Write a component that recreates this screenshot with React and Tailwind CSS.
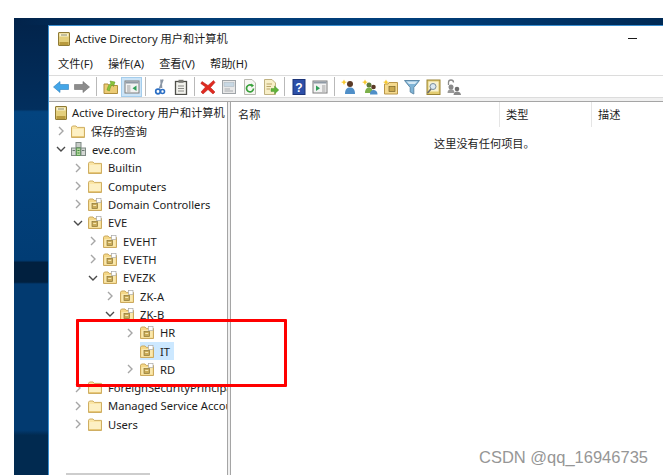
import React from 'react';

const uiFont = { fontFamily: '"Noto Sans", "Noto Sans CJK SC", sans-serif' };

function AdIcon() {
  return (
    <svg width="12" height="14" viewBox="0 0 12 14" className="shrink-0">
      <rect x="0.5" y="0.5" width="11" height="13" rx="0.5" fill="#e4cf7c" stroke="#8f7a35" />
      <rect x="1.5" y="1.5" width="9" height="3" fill="#f9f3cf" />
      <rect x="1.5" y="10" width="9" height="3" fill="#b89a3e" />
      <rect x="3" y="2.5" width="6" height="1" fill="#8c8c70" />
    </svg>
  );
}

function Folder() {
  return (
    <svg width="14" height="13" viewBox="0 0 14 13" className="shrink-0">
      <path d="M0.5 12.5V2.2L1.5 1H5L6.2 2.4H13.5V12.5Z" fill="#fbe6a6" stroke="#cfae62" />
      <rect x="1.5" y="4" width="11" height="7.5" fill="#fdf0c4" />
      <rect x="1" y="11" width="12" height="1" fill="#e8c878" />
    </svg>
  );
}

function OuFolder() {
  return (
    <svg width="14" height="13" viewBox="0 0 14 13" className="shrink-0">
      <path d="M0.5 12.5V2.2L1.5 1H5L6.2 2.4H13.5V12.5Z" fill="#f5d888" stroke="#cba95e" />
      <rect x="1.5" y="4" width="11" height="7.5" fill="#fae8ae" />
      <rect x="8.5" y="0.5" width="4.5" height="4" fill="#ffffff" stroke="#a8a8a8" strokeWidth="0.7" />
      <rect x="4" y="5.5" width="5.5" height="5" fill="#c9ab58" stroke="#8a7434" strokeWidth="0.7" />
      <rect x="5.2" y="7" width="3" height="1" fill="#f6e6b2" />
    </svg>
  );
}

function DomainIcon() {
  return (
    <svg width="15" height="14" viewBox="0 0 15 14" className="shrink-0">
      <rect x="5" y="0.5" width="5" height="5" fill="#c8cdc8" stroke="#7f8a85" />
      <rect x="0.5" y="6" width="4.5" height="7.5" fill="#d4d8d4" stroke="#7f8a85" />
      <rect x="5.5" y="6" width="4" height="7.5" fill="#b4d8a0" stroke="#5f9a58" />
      <rect x="10" y="6" width="4.5" height="7.5" fill="#d4d8d4" stroke="#7f8a85" />
      <rect x="1.5" y="8" width="2.5" height="1" fill="#6d7a75" />
      <rect x="11" y="8" width="2.5" height="1" fill="#6d7a75" />
      <rect x="6.5" y="8" width="2" height="1" fill="#3f8a3a" />
      <rect x="6.5" y="10.5" width="2" height="1" fill="#3f8a3a" />
    </svg>
  );
}

function Chevron({ open }) {
  return (
    <svg width="10" height="10" viewBox="0 0 10 10" className="shrink-0">
      {open ? (
        <path d="M1 3L5 7L9 3" fill="none" stroke="#4a4a4a" strokeWidth="1.4" />
      ) : (
        <path d="M3 1L7 5L3 9" fill="none" stroke="#a6a6a6" strokeWidth="1.4" />
      )}
    </svg>
  );
}

function Sep({ w }) {
  return (
    <div className={`${w} h-[19px] flex justify-center shrink-0`}>
      <div className="w-px h-full bg-[#b9b9b9]" />
    </div>
  );
}

function Tool({ selected, children }) {
  return (
    <div
      className={
        selected
          ? 'w-[21px] h-[20px] flex items-center justify-center shrink-0 bg-[#cce4f7] border border-[#a4cdec]'
          : 'w-[21px] h-[20px] flex items-center justify-center shrink-0'
      }
    >
      <svg width="16" height="16" viewBox="0 0 16 16">
        {children}
      </svg>
    </div>
  );
}

const spark = <path d="M3 0.5L4 2.5L6 3L4 4L3 6L2 4L0 3L2 2.5Z" fill="#f7c92e" />;

function Toolbar() {
  return (
    <div className="h-[21px] flex items-center pl-px bg-white border-y border-[#dcdcdc] box-content">
      <Tool>
        <path d="M0.5 8L7 2.5V5.5H15.5V10.5H7V13.5Z" fill="#44a6e8" stroke="#2a7fc0" strokeWidth="0.6" />
      </Tool>
      <Tool>
        <path d="M15.5 8L9 2.5V5.5H0.5V10.5H9V13.5Z" fill="#8c8c8c" stroke="#707070" strokeWidth="0.6" />
      </Tool>
      <Sep w="w-[8px]" />
      <Tool>
        <path d="M1 14.5V5H5L6 6.5H14.5V14.5Z" fill="#eccb74" stroke="#b08f3e" />
        <path d="M4 11C5 7 6 5 8 4.5L7 2L12 3L10.5 7.5L9.5 5.5C8 6.5 7 9 6.5 12Z" fill="#8ac43a" stroke="#5c9420" strokeWidth="0.5" />
      </Tool>
      <Tool selected>
        <rect x="1" y="2" width="14" height="12" fill="#f2f2f2" stroke="#7d7d7d" />
        <rect x="1.5" y="2.5" width="13" height="2" fill="#8f9aa5" />
        <rect x="3" y="6" width="3.5" height="7" fill="#c8c8c8" />
        <path d="M12.5 6.5V12L8.5 9.2Z" fill="#2f9e58" />
      </Tool>
      <Sep w="w-[7px]" />
      <Tool>
        <path d="M11 0.5L7.5 9.5M9 0.5L9.5 9" fill="none" stroke="#8a96a5" strokeWidth="1.6" />
        <circle cx="6" cy="12.5" r="2.3" fill="none" stroke="#2c6fc4" strokeWidth="1.7" />
        <circle cx="10.5" cy="12.5" r="2" fill="none" stroke="#2c6fc4" strokeWidth="1.6" />
      </Tool>
      <Tool>
        <rect x="2.5" y="2.5" width="11" height="13" fill="#f1f1ec" stroke="#4f4f4a" strokeWidth="1.3" />
        <rect x="5.5" y="0.8" width="5" height="3" fill="#7a7a75" />
        <path d="M5 7H11M5 9.5H11M5 12H11" stroke="#8a8a85" />
      </Tool>
      <Sep w="w-[6px]" />
      <Tool>
        <path d="M2 2.5L8 6.5L13.5 1.5L15 3.5L10.5 8.5L15 13L13 15L8 10.5L3 15L1 13L5.5 8L0.8 4.5Z" fill="#e02a20" stroke="#b01a14" strokeWidth="0.5" />
      </Tool>
      <Tool>
        <rect x="1.5" y="1.5" width="13" height="13" fill="#e8e8e8" stroke="#9fa4a8" />
        <rect x="3" y="3.5" width="10" height="4" fill="#c8d8e4" stroke="#a8b4bc" strokeWidth="0.5" />
        <path d="M3.5 10H9M3.5 12H12" stroke="#a8acb0" />
      </Tool>
      <Tool>
        <path d="M2.5 0.5H10L13.5 4V15.5H2.5Z" fill="#f6f6f2" stroke="#b9b9b0" />
        <path d="M11.5 9.5A3.5 3.5 0 1 1 10 6.5" fill="none" stroke="#38a13a" strokeWidth="1.7" />
        <path d="M9 4.5L12 6.5L9.5 8.5Z" fill="#38a13a" />
      </Tool>
      <Tool>
        <path d="M1.5 0.5H9L12.5 4V15.5H1.5Z" fill="#f8efc8" stroke="#bfb180" />
        <path d="M3.5 5H9M3.5 7.5H8M3.5 10H7" stroke="#b9a468" />
        <path d="M8 9.5H11.5V7L15.8 11L11.5 15V12.5H8Z" fill="#5fb33a" stroke="#3f8a22" strokeWidth="0.4" />
      </Tool>
      <Sep w="w-[7px]" />
      <Tool>
        <rect x="2" y="0.5" width="12" height="15" fill="#2c4fa8" stroke="#1c3478" />
        <text x="8" y="13" fontSize="12" fontWeight="700" textAnchor="middle" fill="#ffffff" fontFamily="Liberation Sans">?</text>
      </Tool>
      <Tool>
        <rect x="1" y="2" width="14" height="12" fill="#f2f2f2" stroke="#7d7d7d" />
        <rect x="1.5" y="2.5" width="13" height="2" fill="#8f9aa5" />
        <rect x="10" y="6" width="3.5" height="7" fill="#c8c8c8" />
        <path d="M4 6.5V12L8 9.2Z" fill="#2f9e58" />
      </Tool>
      <Sep w="w-[8px]" />
      <Tool>
        <circle cx="9" cy="5" r="3" fill="#5a3a26" />
        <path d="M4 15C4 10 6 8.5 9 8.5S14 10 14 15Z" fill="#4f8fc8" />
        {spark}
      </Tool>
      <Tool>
        <circle cx="7" cy="6" r="2.5" fill="#5f7a3a" />
        <path d="M3 14C3 10 5 8.5 7 8.5S11 10 11 14Z" fill="#7cb04a" />
        <circle cx="11.5" cy="8" r="2.3" fill="#5a3a26" />
        <path d="M8 15.5C8 12 10 11 11.5 11S15.5 12 15.5 15.5Z" fill="#4f8fc8" />
        {spark}
      </Tool>
      <Tool>
        <path d="M1.5 15V5H5L6 3.5H14.5V15Z" fill="#f5da8e" stroke="#b9964a" />
        <rect x="6" y="7.5" width="6" height="5" fill="#c9a84e" stroke="#7a6428" strokeWidth="0.7" />
        {spark}
      </Tool>
      <Tool>
        <path d="M0.5 1.5H15.5L9.8 8.5V15L6.2 13V8.5Z" fill="#7fb4d6" stroke="#5f8aa8" />
        <path d="M2.5 2.5H13.5L11 5H5Z" fill="#d5e8f4" />
      </Tool>
      <Tool>
        <rect x="2" y="1" width="13" height="14.5" fill="#e3cc70" stroke="#9a8334" />
        <rect x="3.5" y="2.5" width="10" height="10" fill="#f8f2cf" />
        <circle cx="8" cy="7.5" r="3" fill="#dbe9f2" stroke="#7b8f9c" />
        <path d="M6 10L2.5 14" stroke="#6d6d6d" strokeWidth="1.6" />
      </Tool>
      <Tool>
        <path d="M2.5 6V3.5A2.5 2.5 0 0 1 7.5 3.5" fill="none" stroke="#8a8a8a" strokeWidth="1.3" />
        <circle cx="5" cy="8" r="2.5" fill="#8a8a8a" />
        <path d="M1.5 14C1.5 11 3.5 10 5 10S8.5 11 8.5 14Z" fill="#9a9a9a" />
        <circle cx="11" cy="10" r="2.3" fill="#6f6f6f" />
        <path d="M7.5 16C7.5 13.5 9.5 12.5 11 12.5S15 13.5 15 16Z" fill="#8a8a8a" />
      </Tool>
    </div>
  );
}

const indents = {
  0: 'pl-[7px]',
  1: 'pl-[24px]',
  2: 'pl-[39px]',
  3: 'pl-[56px]',
  4: 'pl-[76px]',
};

const rows = [
  { level: 0, label: '保存的查询', icon: 'folder' },
  { level: 0, label: 'eve.com', icon: 'domain', open: true },
  { level: 1, label: 'Builtin', icon: 'folder' },
  { level: 1, label: 'Computers', icon: 'folder' },
  { level: 1, label: 'Domain Controllers', icon: 'ou' },
  { level: 1, label: 'EVE', icon: 'ou', open: true },
  { level: 2, label: 'EVEHT', icon: 'ou' },
  { level: 2, label: 'EVETH', icon: 'ou' },
  { level: 2, label: 'EVEZK', icon: 'ou', open: true },
  { level: 3, label: 'ZK-A', icon: 'ou' },
  { level: 3, label: 'ZK-B', icon: 'ou', open: true },
  { level: 4, label: 'HR', icon: 'ou' },
  { level: 4, label: 'IT', icon: 'ou', selected: true, noChevron: true },
  { level: 4, label: 'RD', icon: 'ou' },
  { level: 1, label: 'ForeignSecurityPrincipals', icon: 'folder' },
  { level: 1, label: 'Managed Service Accounts', icon: 'folder' },
  { level: 1, label: 'Users', icon: 'folder' },
];

function TreeRow({ row }) {
  return (
    <div className={`h-[18.33px] flex items-center whitespace-nowrap ${indents[row.level]}`}>
      <div className="w-[10px] shrink-0 mr-[5px] flex">
        {!row.noChevron && <Chevron open={row.open} />}
      </div>
      <div className={row.selected ? 'flex items-center h-full bg-[#cce8ff] pr-[4px]' : 'flex items-center h-full'}>
        {row.icon === 'folder' && <Folder />}
        {row.icon === 'ou' && <OuFolder />}
        {row.icon === 'domain' && <DomainIcon />}
        <span className="ml-[6px]">{row.label}</span>
      </div>
    </div>
  );
}

export default function App() {
  return (
    <div className="relative w-[663px] h-[475px] bg-white overflow-hidden pt-[18px] pl-[14px]">
      <div className="h-[457px] bg-[linear-gradient(to_bottom,#02234a_0%,#022f5e_20%,#03447f_20.5%,#013c74_53%,#01203f_53.5%,#01203f_57.8%,#023a70_58.2%,#023a70_90.2%,#012a50_91.3%,#012a50_100%)]">
        <div className="h-[7px] bg-[linear-gradient(to_right,#02234a,#013c74_30%,#003f7c_60%,#002a55)]" />
        <div className="pl-[34px]">
          <div
            className="h-[450px] flex flex-col bg-white border-l border-t border-[#3a8fd0] text-[11.2px] leading-none text-[#1c1c1c]"
            style={uiFont}
          >
            <div className="h-[25px] shrink-0 flex items-center pl-[9px] pr-[26px]">
              <AdIcon />
              <span className="ml-[5px]">Active Directory 用户和计算机</span>
              <div className="ml-auto w-[9px] h-px bg-[#1a1a1a]" />
            </div>
            <div className="h-[24px] shrink-0 flex items-center pt-px pl-[9px] gap-[15px]">
              <span>文件(F)</span>
              <span>操作(A)</span>
              <span>查看(V)</span>
              <span>帮助(H)</span>
            </div>
            <Toolbar />
            <div className="h-[3px] shrink-0 bg-[#f0f0f0]" />
            <div className="flex-1 min-h-0 flex border-t border-[#a5a5a5]">
              <div className="w-[178px] shrink-0 overflow-hidden relative">
                <div className="h-[20px] flex items-center pt-[2px] pl-[6px] whitespace-nowrap">
                  <AdIcon />
                  <span className="ml-[5px]">Active Directory 用户和计算机</span>
                </div>
                {rows.map((row) => (
                  <TreeRow key={row.label} row={row} />
                ))}
                <div className="absolute bottom-0 left-[17px] w-[84px] h-[2px] bg-[#cdcdcd]" />
              </div>
              <div className="w-[4px] shrink-0 bg-[#f0f0f0] border-x border-[#a5a5a5]" />
              <div className="flex-1 min-w-0">
                <div className="h-[25px] flex items-center">
                  <div className="w-[269px] h-full pl-[7px] flex items-center border-r border-[#e5e5e5]">名称</div>
                  <div className="w-[92px] h-full pl-[6px] flex items-center border-r border-[#e5e5e5]">类型</div>
                  <div className="pl-[6px]">描述</div>
                </div>
                <div className="pt-[11px] pl-[203px]">这里没有任何项目。</div>
              </div>
            </div>
          </div>
        </div>
      </div>
      <div className="absolute left-[76px] top-[319px] w-[211px] h-[68px] border-[3px] border-[#ff0000] rounded-[1px]" />
      <div
        className="absolute right-[15px] top-[449px] text-[16.5px] leading-none text-[#969696]"
        style={{ fontFamily: '"Liberation Sans", sans-serif' }}
      >
        CSDN @qq_16946735
      </div>
    </div>
  );
}
